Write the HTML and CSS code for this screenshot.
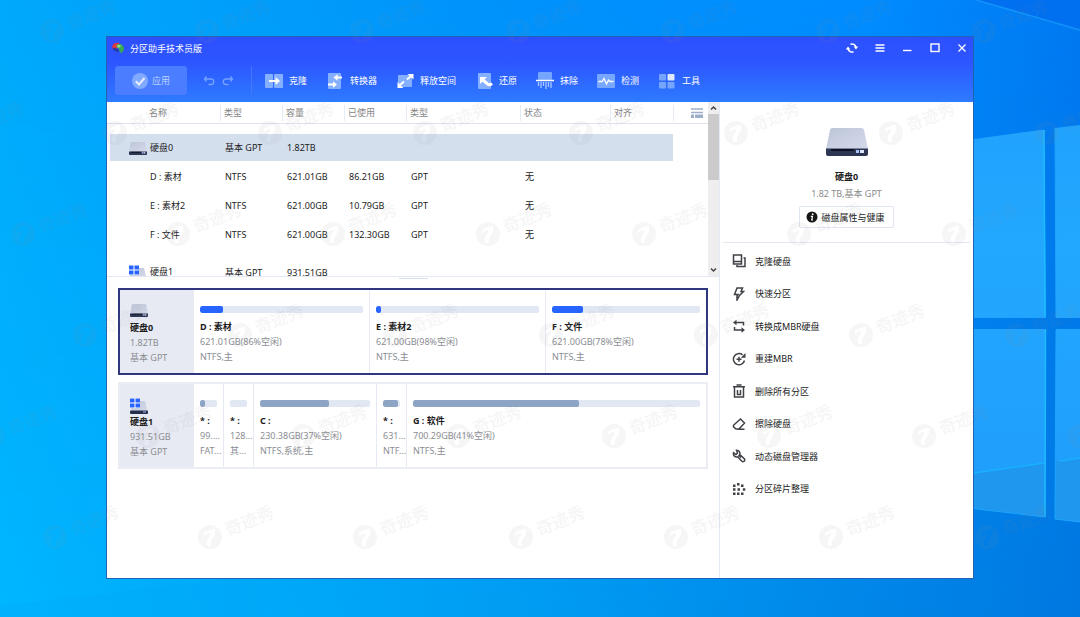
FILE: index.html
```html
<!DOCTYPE html>
<html lang="zh-CN">
<head>
<meta charset="utf-8">
<title>分区助手技术员版</title>
<link rel="stylesheet" href="styles.css">
</head>
<body>
<svg class="wallpaper" viewBox="0 0 1080 617" preserveAspectRatio="none" aria-hidden="true">
  <defs>
    <linearGradient id="sky" x1="0" y1="0" x2="1" y2="0">
      <stop offset="0" stop-color="#00a9fb"/><stop offset=".45" stop-color="#0093fb"/><stop offset=".8" stop-color="#008cff"/><stop offset="1" stop-color="#0079f2"/>
    </linearGradient>
    <linearGradient id="floor" x1="0" y1="0" x2="1" y2="0">
      <stop offset="0" stop-color="#00b6ff"/><stop offset=".5" stop-color="#009cf2"/><stop offset="1" stop-color="#0078e0"/>
    </linearGradient>
    <linearGradient id="fade" x1="0" y1="0" x2="0" y2="1">
      <stop offset="0" stop-color="#000"/><stop offset="1" stop-color="#fff"/>
    </linearGradient>
    <mask id="lower"><rect width="1080" height="617" fill="url(#fade)"/></mask>
    <linearGradient id="pane" x1="0" y1="0" x2="0" y2="1">
      <stop offset="0" stop-color="#20a2fd"/><stop offset=".3" stop-color="#22a8ff"/><stop offset="1" stop-color="#1f9dfb"/>
    </linearGradient>
  </defs>
  <rect width="1080" height="617" fill="url(#sky)"/>
  <rect width="1080" height="617" fill="url(#floor)" mask="url(#lower)"/>
  <path d="M976 0L1080 30V0Z" fill="#0070f0"/>
  <path d="M976 0L1080 30" stroke="#1094fb" stroke-width="1.5"/>
  <path d="M0 606L260 575V617H0Z" fill="#00a4f4" opacity=".2"/>
  <path d="M960 141L1044 129.500L1046 318H960ZM1055 128L1080 125V318H1056ZM960 329H1046L1045 517L960 507ZM1056 329H1080V522L1055 519Z" fill="url(#pane)"/>
  <path d="M960 475L1045 463V517L960 507ZM1056 461L1080 458V522L1055 519Z" fill="#1f97ee"/>
  <path d="M960 475L1045 463M1059 461L1080 458" stroke="#18b0ff" stroke-width="1.5"/>
  <path d="M1044 130L1045 317M1045.500 330L1045 517" stroke="#1dbcff" stroke-width="1.500"/>
  <path d="M1055 128L1056 318M1056 330L1055 519L1080 522M1045 517L960 507" fill="none" stroke="#1ea4fb"/>
</svg>

<svg class="symbols" aria-hidden="true">
  <defs>
    <linearGradient id="metal" x1="0" y1="0" x2="1" y2="1"><stop offset="0" stop-color="#bcc5d8"/><stop offset="1" stop-color="#d5daea"/></linearGradient>
    <symbol id="disk" viewBox="0 0 42 28" preserveAspectRatio="none">
      <path d="M4 2Q4.500 0 6.500 0H35.500Q37.500 0 38 2L42 21H0Z" fill="url(#metal)"/>
      <path d="M0 20.500H42V26Q42 28 40 28H2Q0 28 0 26Z" fill="#2c3552"/>
      <path d="M5 21H28V22Q28 23 27 23H6Q5 23 5 22Z" fill="#0d1322"/>
      <rect x="30" y="22" width="3" height="3" fill="#a9c0ff"/><rect x="34" y="22" width="4" height="3" fill="#dce6ff"/>
    </symbol>
    <symbol id="disk-system" viewBox="0 0 18 16">
      <path d="M7 3H15L17.500 13H1V8Z" fill="url(#metal)"/>
      <rect y="12.500" width="18" height="3.500" rx="1" fill="#252e4b"/>
      <rect x="13" y="13.500" width="3" height="1" fill="#a9c0ff"/>
      <path d="M0 0H10V10H0Z" fill="#fff"/>
      <path d="M0 .5H4.500V4.500H0ZM5.500 .5H10V4.500H5.500ZM0 5.500H4.500V9.500H0ZM5.500 5.500H10V9.500H5.500Z" fill="#2864ff"/>
    </symbol>
  </defs>
</svg>

<main class="window">
  <header class="header">
    <div class="titlebar">
      <svg class="app-logo" viewBox="0 0 14 12"><path d="M.5 7Q-.5 1 5 .7Q8-.2 8 2L5 6.500Q3 8 .5 7Z" fill="#e5353d"/><path d="M4.500 4Q5 1.500 8 1.700Q11 1.500 12 4Q14 6 12 9.500Q11 12 8.500 10.500L7.500 7Z" fill="#34a853"/><path d="M5 3L9 2.500L9.500 5L6.500 6Z" fill="#89dd83"/><path d="M1 5.500L6 7L8 10.500Q3 10 1 7.500Z" fill="#243d9d"/></svg>
      <h1 class="title">分区助手技术员版</h1>
      <div class="controls">
        <button class="control" aria-label="刷新"><svg viewBox="0 0 12 12"><g fill="none" stroke="#fff" stroke-width="1.500"><path d="M4.500 2.200A4 4 0 0 1 9.900 5M7.500 9.800A4 4 0 0 1 2.100 7"/></g><path d="M7.600 4.500H12.200L10 7.500ZM-.2 7.500H4.400L2 4.500Z" fill="#fff"/></svg></button>
        <button class="control" aria-label="菜单"><svg viewBox="0 0 12 12"><path d="M1.500 3H10.500M1.500 6H10.500M1.500 9H10.500" stroke="#fff" stroke-width="1.300"/></svg></button>
        <button class="control" aria-label="最小化"><svg viewBox="0 0 12 12"><path d="M2 8.500H10.500" stroke="#fff" stroke-width="1.400"/></svg></button>
        <button class="control" aria-label="最大化"><svg viewBox="0 0 12 12"><rect x="2" y="2" width="8" height="7.500" fill="none" stroke="#fff" stroke-width="1.400"/></svg></button>
        <button class="control" aria-label="关闭"><svg viewBox="0 0 12 12"><path d="M2.500 2.500L9.500 9.500M9.500 2.500L2.500 9.500" stroke="#fff" stroke-width="1.300"/></svg></button>
      </div>
    </div>
    <nav class="toolbar">
      <button class="apply"><svg class="apply-icon" viewBox="0 0 16 16"><circle cx="8" cy="8" r="8" fill="#80a9ff"/><path d="M3.800 8.300L7 11.500L12.500 5" fill="none" stroke="#e5edff" stroke-width="2"/></svg>应用</button>
      <div class="history">
        <button class="step" aria-label="撤销"><svg viewBox="0 0 12 12"><path d="M3.500 1.500L1.500 4L3.500 6.500M1.500 4H8A2.500 2.500 0 0 1 8 9.500H5.500" fill="none" stroke="#75a2ff" stroke-width="1.300"/></svg></button>
        <button class="step" aria-label="重做"><svg viewBox="0 0 12 12"><path d="M8.500 1.500L10.500 4L8.500 6.500M10.500 4H4A2.500 2.500 0 0 0 4 9.500H6.500" fill="none" stroke="#75a2ff" stroke-width="1.300"/></svg></button>
      </div>
      <div class="tools">
        <button class="tool"><svg viewBox="0 0 18 18"><rect y="2" width="8" height="14" rx="1" fill="#85b0ff"/><rect x="9" y="2" width="9" height="14" rx="1" fill="#85b0ff"/><path d="M4 9H12" stroke="#fff" stroke-width="2"/><path d="M10.500 5L15 9L10.500 13Z" fill="#fff"/></svg>克隆</button>
        <button class="tool"><svg viewBox="0 0 18 18"><rect x="2" y="1" width="13" height="16" rx="1" fill="#85b0ff"/><path d="M10 5.500H16M2 12.500H8" stroke="#fff" stroke-width="2"/><path d="M11.500 2.300L7.500 5.500L11.500 8.700ZM7 9.300L11 12.500L7 15.700Z" fill="#fff"/></svg>转换器</button>
        <button class="tool"><svg viewBox="0 0 18 18"><rect x="2" y="3" width="14" height="12" rx="1" fill="#85b0ff"/><path d="M4 13L8 9.500M11 7.500L15 4" stroke="#fff" stroke-width="2"/><path d="M11.500 2H17.500V7.500ZM1.500 10V16H7.500Z" fill="#fff"/></svg>释放空间</button>
        <button class="tool"><svg viewBox="0 0 18 18"><rect x="3" y="1" width="13" height="16" rx="1" fill="#85b0ff"/><path d="M5 5H12L5 12Z" fill="#fff"/><path d="M8 8L12 11.500Q14 14 17 11.500" fill="none" stroke="#fff" stroke-width="3"/></svg>还原</button>
        <button class="tool"><svg viewBox="0 0 18 18"><rect x="2" width="14" height="8" rx="1" fill="#75a5ff"/><path d="M0 8.500H18" stroke="#fff" stroke-width="1.500"/><path d="M2.500 10V14M5 10V16M7.500 10V14M10 10V17M12.500 10V15M15 10V16" stroke="#a9c8ff" stroke-width="1.300"/></svg>抹除</button>
        <button class="tool"><svg viewBox="0 0 18 18"><rect y="2" width="18" height="14" rx="1" fill="#78a7ff"/><path d="M1.500 9.500H5L7 6.500L9.500 12L11.500 8L13 9.500H16.500" fill="none" stroke="#fff" stroke-width="1.300"/></svg>检测</button>
        <button class="tool"><svg viewBox="0 0 18 18"><g fill="#75a5ff"><rect x="1" y="2" width="7" height="6.500" rx="1"/><rect x="1" y="10" width="7" height="6.500" rx="1"/><rect x="9.500" y="10" width="7" height="6.500" rx="1"/></g><rect x="9.500" y="2" width="7" height="6.500" rx="1" fill="#e0eaff"/></svg>工具</button>
      </div>
    </nav>
  </header>

  <div class="content">
    <section class="left">
      <div class="list-pane">
        <div class="list">
          <table class="partitions">
            <colgroup><col class="c-edge"><col class="c-name"><col class="c-mid"><col class="c-mid"><col class="c-mid"><col class="c-style"><col class="c-status"><col class="c-align"><col></colgroup>
            <thead>
              <tr><td></td><th class="first"><span>名称</span></th><th><span>类型</span></th><th><span>容量</span></th><th><span>已使用</span></th><th><span>类型</span></th><th><span>状态</span></th><th><span>对齐</span></th>
              <th class="options"><span><button class="view" aria-label="视图"><svg viewBox="0 0 12 10"><path d="M0 1H12M0 4.500H12" stroke="#9daeca" stroke-width="1.300"/><path d="M0 6.500H3V10H0ZM4 6.500H12V10H4Z" fill="#9daeca"/></svg></button></span></th></tr>
            </thead>
            <tbody>
              <tr class="spacer"><td colspan="9"></td></tr>
              <tr class="disk-row selected"><td></td><td class="name"><svg class="row-icon"><use href="#disk"/></svg>硬盘0</td><td>基本 GPT</td><td>1.82TB</td><td></td><td></td><td></td><td></td><td></td></tr>
              <tr class="spacer-thin"><td colspan="9"></td></tr>
              <tr><td></td><td class="name sub">D : 素材</td><td>NTFS</td><td>621.01GB</td><td>86.21GB</td><td>GPT</td><td>无</td><td></td><td></td></tr>
              <tr><td></td><td class="name sub">E : 素材2</td><td>NTFS</td><td>621.00GB</td><td>10.79GB</td><td>GPT</td><td>无</td><td></td><td></td></tr>
              <tr><td></td><td class="name sub">F : 文件</td><td>NTFS</td><td>621.00GB</td><td>132.30GB</td><td>GPT</td><td>无</td><td></td><td></td></tr>
              <tr class="spacer"><td colspan="9"></td></tr>
              <tr class="disk-row"><td></td><td class="name"><svg class="row-icon tall"><use href="#disk-system"/></svg>硬盘1</td><td>基本 GPT</td><td>931.51GB</td><td></td><td></td><td></td><td></td><td></td></tr>
            </tbody>
          </table>
        </div>
        <div class="scrollbar">
          <svg class="arrow" viewBox="0 0 11 12"><path d="M3 7.500L5.500 5L8 7.500" fill="none" stroke="#444" stroke-width="1.500"/></svg>
          <div class="thumb"></div>
          <svg class="arrow bottom" viewBox="0 0 11 12"><path d="M3 4.500L5.500 7L8 4.500" fill="none" stroke="#444" stroke-width="1.500"/></svg>
        </div>
      </div>
      <div class="splitter"></div>

      <div class="cards">
        <article class="card active">
          <div class="card-label"><svg class="card-icon"><use href="#disk"/></svg><h2>硬盘0</h2><p>1.82TB</p><p>基本 GPT</p></div>
          <div class="part wide"><div class="bar"><div class="fill" style="width:14%"></div></div><h3>D : 素材</h3><p>621.01GB(86%空闲)</p><p>NTFS,主</p></div>
          <div class="part wide"><div class="bar"><div class="fill" style="width:3%"></div></div><h3>E : 素材2</h3><p>621.00GB(98%空闲)</p><p>NTFS,主</p></div>
          <div class="part rest"><div class="bar"><div class="fill" style="width:21%"></div></div><h3>F : 文件</h3><p>621.00GB(78%空闲)</p><p>NTFS,主</p></div>
        </article>
        <article class="card">
          <div class="card-label"><svg class="card-icon tall"><use href="#disk-system"/></svg><h2>硬盘1</h2><p>931.51GB</p><p>基本 GPT</p></div>
          <div class="part tiny"><div class="bar"><div class="fill" style="width:30%"></div></div><h3>* :</h3><p>99....</p><p>FAT...</p></div>
          <div class="part tiny"><div class="bar"></div><h3>* :</h3><p>128...</p><p>其...</p></div>
          <div class="part medium"><div class="bar"><div class="fill" style="width:63%"></div></div><h3>C :</h3><p>230.38GB(37%空闲)</p><p>NTFS,系统,主</p></div>
          <div class="part tiny"><div class="bar"><div class="fill" style="width:86%"></div></div><h3>* :</h3><p>631...</p><p>NTF...</p></div>
          <div class="part rest"><div class="bar"><div class="fill" style="width:58%"></div></div><h3>G : 软件</h3><p>700.29GB(41%空闲)</p><p>NTFS,主</p></div>
        </article>
      </div>
    </section>

    <aside class="side">
      <div class="summary">
        <svg class="summary-icon"><use href="#disk"/></svg>
        <h2>硬盘0</h2>
        <p>1.82 TB,基本 GPT</p>
        <button class="health"><svg viewBox="0 0 12 12"><circle cx="6" cy="6" r="5.500" fill="#151515"/><circle cx="6.700" cy="3.200" r=".9" fill="#fff"/><path d="M4.800 5.300H6.500L5.700 9H7" fill="none" stroke="#fff" stroke-width="1.200"/></svg>磁盘属性与健康</button>
      </div>
      <div class="actions">
        <button class="action"><svg viewBox="0 0 14 14"><path d="M1.500 1H9.500V10H1.500ZM1.500 7.500H9.500M11.500 4H13V12.500H5V11"/></svg>克隆硬盘</button>
        <button class="action"><svg viewBox="0 0 14 14"><path d="M5 1H10.500L9 4.500H11.500L7.500 8.500L5 13V9L6 7.500H2.500Z"/></svg>快速分区</button>
        <button class="action"><svg viewBox="0 0 14 14"><path d="M3 3.500H11.500V6.500M2.500 8V11H11"/><path class="head" d="M1 3.500L4.500 .8V6.200ZM13 11L9.500 8.300V13.700Z"/></svg>转换成MBR硬盘</button>
        <button class="action"><svg viewBox="0 0 14 14"><path d="M10.500 2.800A5.600 5.600 0 1 0 12.500 8.500M7 4.700V9.700M4.500 7.200H9.500"/><path class="head" d="M13.500 1V5.800H8.800Z"/></svg>重建MBR</button>
        <button class="action"><svg viewBox="0 0 14 14"><path d="M1 2.800H13M4.500 1H9.500M2.500 3V13H11.500V3M5.500 6V10.500H8.500V6"/></svg>删除所有分区</button>
        <button class="action"><svg viewBox="0 0 14 14"><path d="M1.500 8.300L8.500 2L12.500 6L7 12H4L1.500 9.800ZM6 12.200H12.500"/></svg>擦除硬盘</button>
        <button class="action"><svg viewBox="0 0 14 14"><path d="M4.500 1.200A3.300 3.300 0 0 1 7.800 5.500L12.500 10Q13.500 12.500 10.800 12.800Q10 12.800 5.800 7.800A3.300 3.300 0 0 1 1.500 3.800L4 5.500L5.500 4ZM6.500 6L9 8.500"/></svg>动态磁盘管理器</button>
        <button class="action solid"><svg viewBox="0 0 14 14"><path d="M1 2.500H3.500V5H1ZM1 6.300H3.500V8.800H1ZM1 10.500H3.500V13H1ZM5 10.500H7.500V13H5ZM9 10.500H11.500V13H9ZM5 1H7.500V3.500H5ZM9 2.500H11.500V5H9ZM5.500 6.300H8V8.800H5.500ZM10.800 6.300H13.300V8.800H10.800Z"/></svg>分区碎片整理</button>
      </div>
    </aside>
  </div>
</main>

<svg class="watermark" viewBox="0 0 1080 617" preserveAspectRatio="xMinYMin slice" aria-hidden="true">
  <defs>
    <g id="mark">
      <path fill-rule="evenodd" d="M-12 0A12 12 0 1 0 12 0A12 12 0 1 0-12 0ZM-6-4Q0-8 5-8Q6-2 3 1Q0 4 1 9H-3Q-4 3-1 0Q1-2 0-4Q-3-4-6-1Z"/>
      <text x="18" y="-1" transform="rotate(-22 18 -1)">奇迹秀</text>
    </g>
    <g id="marks"><use href="#mark" x="-155"/><use href="#mark"/><use href="#mark" x="155"/><use href="#mark" x="310"/><use href="#mark" x="466"/><use href="#mark" x="621"/><use href="#mark" x="776"/><use href="#mark" x="932"/></g>
  </defs>
  <use href="#marks" x="52" y="31"/><use href="#marks" x="115" y="133"/><use href="#marks" x="178" y="234"/><use href="#marks" x="85" y="335"/><use href="#marks" x="148" y="436"/><use href="#marks" x="55" y="537"/>
</svg>
</body>
</html>
```

FILE: styles.css
```css
* { box-sizing: border-box; }

body {
  margin: 0;
  min-height: 100vh;
  padding: 36px 106px 38px;
  display: flex;
  position: relative;
  overflow: hidden;
  font: 9px/15px "Noto Sans", "Noto Sans CJK SC", sans-serif;
  color: #1c1c1c;
}

h1, h2, h3, p { margin: 0; font-size: 9px; }
h1 { font-weight: 400; }
svg { display: block; flex: none; }

button {
  display: flex;
  align-items: center;
  padding: 0;
  border: 0;
  background: none;
  color: inherit;
  font: inherit;
  white-space: nowrap;
}

.wallpaper, .watermark {
  position: absolute;
  inset: 0;
  width: 100%;
  height: 100%;
}
.watermark {
  pointer-events: none;
  fill: #909090;
  opacity: .08;
  font: 700 17px "Noto Sans CJK SC", sans-serif;
}
.symbols { position: absolute; width: 0; height: 0; }

.window {
  position: relative;
  flex: 1;
  min-width: 0;
  display: flex;
  flex-direction: column;
  border: 1px solid #1f62b8;
  background: #fff;
}

.header {
  height: 65px;
  color: #fff;
  background: linear-gradient(#2d50ff 0, #2d55ff 25px, #2d7bff 100%);
}
.titlebar {
  display: flex;
  align-items: center;
  gap: 5px;
  height: 22px;
  padding-left: 5px;
}
.app-logo { width: 13px; height: 12px; }
.controls {
  display: flex;
  justify-content: space-between;
  width: 132px;
  margin-left: auto;
}
.control { width: 22px; height: 22px; justify-content: center; }
.control svg { width: 12px; height: 12px; }

.toolbar { display: flex; align-items: center; height: 43px; padding-left: 8px; }
.apply {
  width: 72px;
  height: 29px;
  justify-content: center;
  gap: 4px;
  border-radius: 3px;
  background: #4a7dff;
  color: #bcd2ff;
}
.apply-icon { width: 16px; height: 16px; }
.history {
  display: flex;
  gap: 7px;
  height: 29px;
  margin-left: 16px;
  padding-right: 17px;
  border-right: 1px solid #4676ff;
}
.step svg { width: 12px; height: 12px; }
.tools { display: flex; gap: 19px; margin-left: 13px; }
.tool { gap: 6px; }
.tool svg { width: 18px; height: 18px; }

.content { flex: 1; display: flex; min-height: 0; }
.left { flex: 1; min-width: 0; }
.list-pane {
  display: flex;
  height: 175px;
  border-bottom: 1px solid #e4eaf5;
}
.list { flex: 1; min-width: 0; overflow: hidden; }

.partitions {
  width: 100%;
  table-layout: fixed;
  border-collapse: separate;
  border-spacing: 0;
}
.partitions th, .partitions td { padding: 0; white-space: nowrap; }
.c-edge { width: 3px; }
.c-name { width: 110px; }
.c-mid { width: 62px; }
.c-style { width: 114px; }
.c-status { width: 90px; }
.c-align { width: 63px; }
.partitions thead tr { height: 22px; }
.partitions thead td, .partitions th { border-bottom: 1px solid #dee4f0; }
.partitions th { text-align: left; font-weight: 400; color: #858585; }
.partitions th span {
  display: block;
  height: 16px;
  padding-left: 3px;
  border-left: 1px solid #e6eaf3;
}
.partitions th.first span { padding-left: 39px; border-left: 0; }
.partitions .options span { padding: 3px 0 0 17px; }
.view svg { width: 12px; height: 10px; }
.partitions tbody tr { height: 29px; }
.partitions tbody td { padding-left: 5px; }
.partitions tbody td:first-child { padding: 0; }
.partitions tbody .spacer { height: 10px; }
.partitions tbody .spacer-thin { height: 1px; }
.partitions tbody .disk-row { height: 27px; }
.partitions .selected td:not(:first-child):not(:last-child) { background: #d4dfee; }
.partitions tbody .name { padding-left: 19px; }
.partitions tbody .name.sub { padding-left: 40px; }
.row-icon {
  display: inline-block;
  vertical-align: middle;
  width: 18px;
  height: 13px;
  margin-right: 3px;
}
.row-icon.tall { height: 16px; }

.scrollbar {
  display: flex;
  flex-direction: column;
  width: 11px;
  background: #eee;
}
.arrow { width: 11px; height: 12px; }
.arrow.bottom { margin-top: auto; }
.thumb { height: 66px; background: #cbcbcb; }
.splitter { width: 29px; height: 2px; margin: 0 auto; border-bottom: 1px solid #d8e0f0; }

.cards {
  display: grid;
  gap: 7px;
  padding: 9px 11px 0;
}
.card { display: flex; height: 87px; border: 2px solid #eaedf4; }
.card.active { border-color: #30377f; }
.card-label {
  width: 74px;
  padding: 14px 0 0 10px;
  background: #e7eaf3;
}
.card-icon { width: 18px; height: 13px; margin-bottom: 3px; }
.card-icon.tall { height: 16px; margin-bottom: 0; }
.card p { color: #8b8d92; white-space: nowrap; }
.part {
  min-width: 0;
  padding: 16px 6px 0;
  border-right: 1px solid #e7eaf3;
}
.part.wide { flex: 0 0 176px; }
.part.medium { flex: 0 0 123px; }
.part.tiny { flex: 0 0 30px; }
.part.rest { flex: 1; border-right: 0; }
.bar {
  height: 7px;
  margin-bottom: 6px;
  border-radius: 2px;
  background: #e1e8f4;
  overflow: hidden;
}
.fill { height: 100%; border-radius: 2px; background: #8ea4c5; }
.active .fill { background: #2864ff; }

.side {
  width: 254px;
  border-left: 1px solid #e4eaf5;
  padding: 0 3px;
}
.summary {
  display: flex;
  flex-direction: column;
  align-items: center;
  padding: 26px 0 14px;
  border-bottom: 1px solid #e4e8f5;
}
.summary-icon { width: 42px; height: 28px; margin-bottom: 13px; }
.summary p { margin: 2px 0 5px; color: #8b8b8b; }
.health {
  height: 22px;
  padding: 0 8px 0 6px;
  gap: 3px;
  border: 1px solid #dfe5f3;
  border-radius: 2px;
  background: #fff;
}
.health svg { width: 12px; height: 12px; }
.actions {
  display: grid;
  grid-auto-rows: 1fr;
  min-height: 260px;
  padding: 0 9px;
  margin-top: 2px;
}
.action { gap: 9px; }
.action svg {
  width: 14px;
  height: 14px;
  fill: none;
  stroke: #404247;
  stroke-width: 1.5;
}
.action .head, .action.solid svg { fill: #404247; stroke: none; }
```
